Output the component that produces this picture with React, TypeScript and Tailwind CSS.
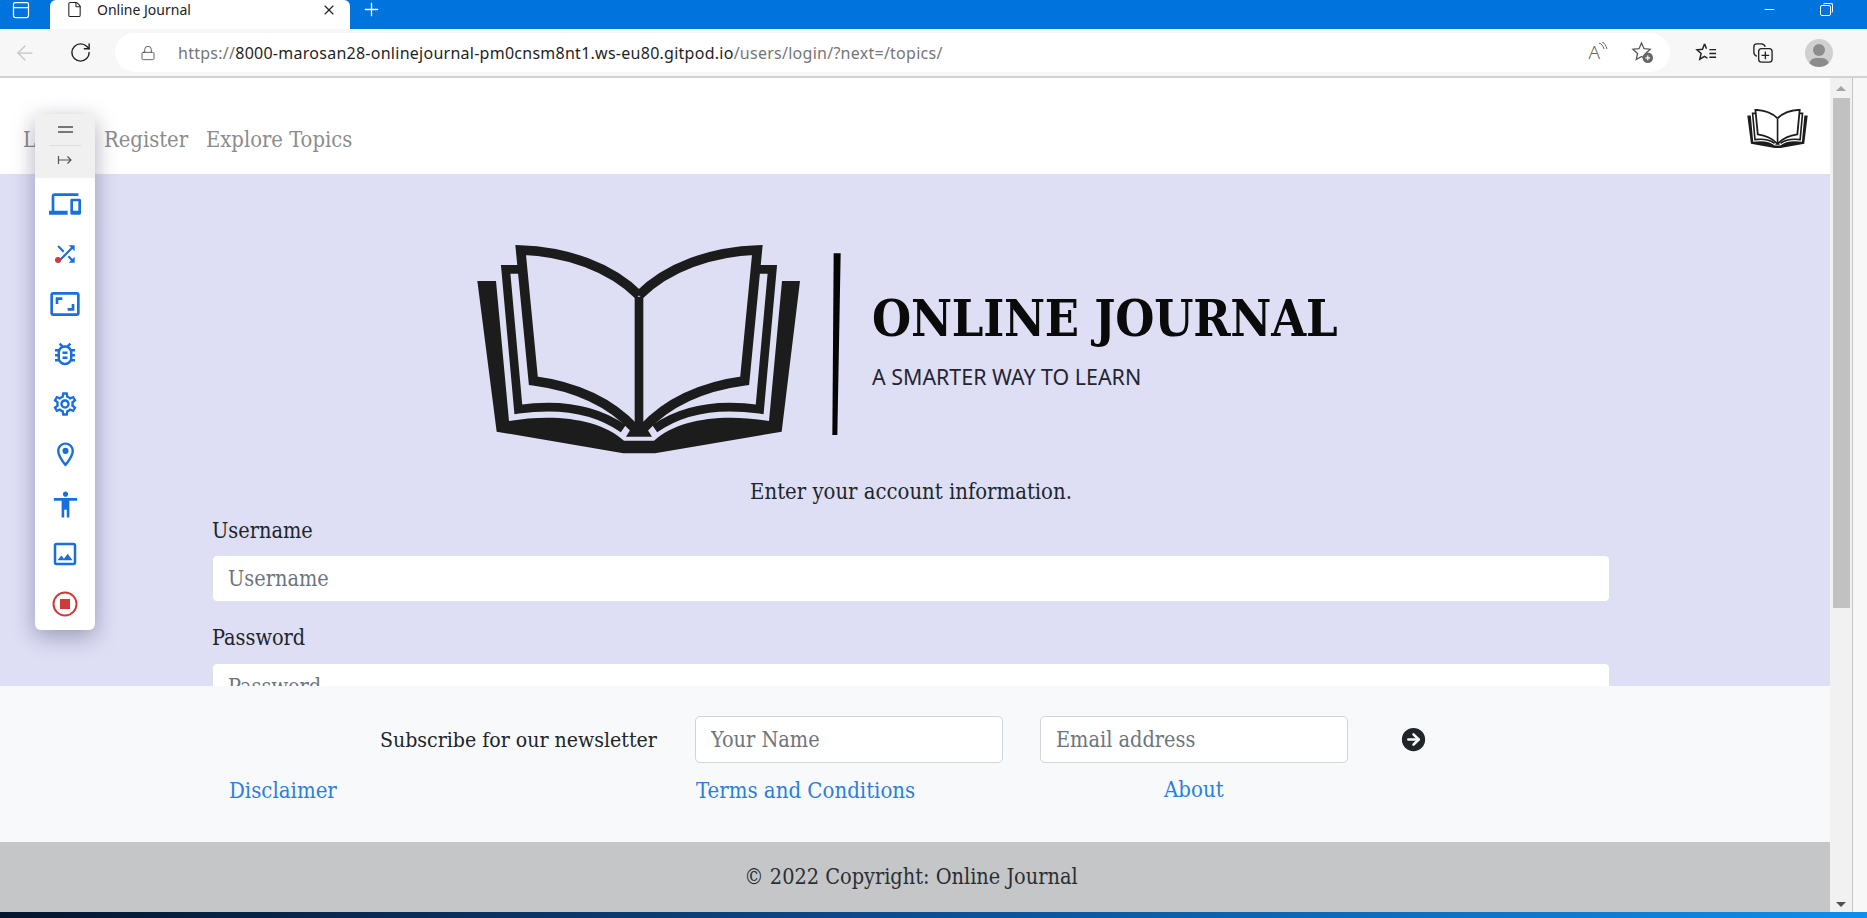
import { ArrowLeft, RotateCw, Plus, X, Minus, Lock, File, PanelTop, CircleArrowRight } from 'lucide-react';
import {
  MdOutlineDevices,
  MdShuffle,
  MdOutlineAspectRatio,
  MdOutlineBugReport,
  MdOutlineSettings,
  MdOutlineLocationOn,
  MdAccessibility,
  MdOutlineImage,
} from 'react-icons/md';

const serif = "font-['DejaVu_Serif_Condensed','DejaVu_Serif',serif]";

// Open book mark, traced from the logo. Coordinates are in a 1200x720 box.
const BookLogo = ({ className, viewBox = '0 0 1200 720', divider = false }: { className: string; viewBox?: string; divider?: boolean }) => (
  <svg viewBox={viewBox} className={className} fill="none">
    <path
      d="M52 153 L108 153 L147 573 C280 550 420 565 492 632 L582 632 C654 565 794 550 927 573 L966 153 L1020 153 L965 605 L585 670 L490 670 L110 605 Z"
      fill="#1c1c1c"
    />
    <g stroke="#1c1c1c" strokeWidth="26" strokeLinejoin="miter">
      <path d="M180 118 L137 118 L175 538 C300 520 410 540 490 596" />
      <path d="M894 118 L937 118 L899 538 C774 520 664 540 584 596" />
      <path d="M537 196 C450 110 320 65 182 60 L220 452 C355 470 455 520 525 596" strokeWidth="29" />
      <path d="M537 196 C624 110 754 65 892 60 L854 452 C719 470 619 520 549 596" strokeWidth="29" />
      <path d="M537 200 L537 612" />
    </g>
    {/* Wedge where the pages meet the spine */}
    <path d="M498 620 L520 585 L554 585 L576 620 Z" fill="#1c1c1c" />
    {divider && <path d="M1121 70 L1142 70 L1132 615 L1117 615 Z" fill="#050505" />}
  </svg>
);

const BrowserChrome = () => (
  <>
    {/* Tab strip */}
    <div className="flex h-[29px] shrink-0 items-center bg-[#0074dc] text-white">
      <div className="flex w-[42px] justify-center pb-[10px]">
        <PanelTop size={20} strokeWidth={1.5} />
      </div>
      <div className="ml-[8px] flex h-full w-[300px] items-center rounded-t-md bg-white pb-[10px] pl-[16px] pr-[12px] text-[#222]">
        <File size={17} strokeWidth={1.5} />
        <span className="ml-[14px] flex-1 font-['Noto_Sans',sans-serif] text-[14px]">Online Journal</span>
        <X size={16} strokeWidth={1.75} className="mr-[1px]" />
      </div>
      <Plus size={21} strokeWidth={1.5} className="mb-[10px] ml-[11px]" />
      <div className="flex-1" />
      <Minus size={15} strokeWidth={1.5} className="mb-[10px] mr-[43px]" />
      <div className="relative mb-[8px] mr-[36px] h-[11px] w-[11px] rounded-[2px] border border-white">
        <div className="absolute left-[2px] top-[-3px] h-[10px] w-[10px] rounded-[2px] border-r border-t border-white" />
      </div>
    </div>
    {/* Address bar */}
    <div className="flex h-[49px] shrink-0 items-center border-b-2 border-[#d2d2d2] bg-[#f7f7f7]">
      <ArrowLeft size={24} strokeWidth={1.25} className="ml-[13px] text-[#c4c4c4]" />
      <RotateCw size={23} strokeWidth={1.5} className="ml-[32px] text-[#222]" />
      <div className="ml-[23px] flex h-[39px] w-[1555px] items-center rounded-full bg-white pl-[25px]">
        <Lock size={16} strokeWidth={1.25} className="text-[#444]" />
        <span className="ml-[22px] font-['Noto_Sans',sans-serif] text-[16px] tracking-[0.26px] text-[#1f1f1f]">
          <span className="text-[#767676]">https://</span>8000-marosan28-onlinejournal-pm0cnsm8nt1.ws-eu80.gitpod.io
          <span className="text-[#767676]">/users/login/?next=/topics/</span>
        </span>
        <div className="flex-1" />
        <span className="relative mr-[31px] font-['Noto_Sans',sans-serif] text-[19px] font-light text-[#666]">
          A
          <svg viewBox="0 0 10 10" className="absolute right-[-8px] top-[4px] h-[10px] w-[10px]" fill="none" stroke="#666">
            <path d="M1 1 C4 2 5 4 6 7 M4 0 C7 1 8 4 9 7" />
          </svg>
        </span>
        <svg viewBox="0 0 24 24" className="mr-[16px] h-[23px] w-[23px]" fill="none" stroke="#555" strokeWidth="1.3">
          <path d="M11 2 L13.6 8 L20 8.6 L15.2 13 L16.5 19.4 L11 16.2 L5.5 19.4 L6.8 13 L2 8.6 L8.4 8 Z" />
          <circle cx="17.5" cy="17.5" r="5.5" fill="#666" stroke="none" />
          <path d="M15 17.5 H20 M17.5 15 V20" stroke="#fff" />
        </svg>
      </div>
      <svg viewBox="0 0 24 24" className="ml-[25px] h-[23px] w-[23px]" fill="none" stroke="#222" strokeWidth="1.5">
        <path d="M10 3 L12 8 M10 3 L7.8 8.6 L2 9.2 L6.4 13 L5 19 L10 16 L13 18 M15 9 H22 M15 13 H22 M15 17 H22" />
      </svg>
      <svg viewBox="0 0 24 24" className="ml-[33px] h-[23px] w-[23px]" fill="none" stroke="#222" strokeWidth="1.4">
        <path d="M6 16 C4 15 3 14 3 12 L3 6 C3 4 4 3 6 3 L11 3 C13 3 14 4 15 6" />
        <rect x="8" y="8" width="14" height="14" rx="3" />
        <path d="M15 11 V19 M11 15 H19" />
      </svg>
      <div className="relative ml-[31px] h-[28px] w-[28px] overflow-hidden rounded-full bg-[#d0d0d0]">
        <div className="absolute left-[8px] top-[5px] h-[12px] w-[12px] rounded-full bg-[#8c8c8c]" />
        <div className="absolute left-[4px] top-[19px] h-[14px] w-[20px] rounded-full bg-[#8c8c8c]" />
      </div>
    </div>
  </>
);

const ToolButton = ({ children }: { children: React.ReactNode }) => (
  <div className="relative flex h-[50px] items-center justify-center text-[#1a6fdc]">{children}</div>
);

// Floating device-toolbar that sits over the page
const FloatingToolbar = () => (
  <div className="absolute left-[35px] top-[114px] z-10 w-[60px] rounded-md bg-white pb-[1px] shadow-[0_6px_22px_rgba(20,20,60,0.35)]">
    <div className="flex h-[64px] flex-col items-center rounded-t-md bg-[#f0f0f0] text-[#666]">
      <div className="flex h-[32px] w-[32px] flex-col items-center justify-center gap-[3px] border-b border-[#dcdcdc]">
        <div className="h-[2px] w-[15px] bg-[#777]" />
        <div className="h-[2px] w-[15px] bg-[#777]" />
      </div>
      <svg viewBox="0 0 16 16" className="mt-[6px] h-[16px] w-[16px]" fill="none" stroke="#555" strokeWidth="1.2">
        <path d="M1.5 4 V12 M1.5 8 H14 M10.5 4.5 L14 8 L10.5 11.5" />
      </svg>
    </div>
    <div className="flex flex-col pt-[1px]">
      <ToolButton>
        <MdOutlineDevices size={32} />
      </ToolButton>
      <ToolButton>
        <MdShuffle size={26} className="ml-[2px]" />
        <div className="absolute left-[20px] top-[28px] h-[6px] w-[6px] rounded-full bg-[#d03a3a]" />
      </ToolButton>
      <ToolButton>
        <MdOutlineAspectRatio size={32} />
      </ToolButton>
      <ToolButton>
        <MdOutlineBugReport size={30} />
      </ToolButton>
      <ToolButton>
        <MdOutlineSettings size={28} />
      </ToolButton>
      <ToolButton>
        <MdOutlineLocationOn size={29} />
      </ToolButton>
      <ToolButton>
        <MdAccessibility size={31} />
      </ToolButton>
      <ToolButton>
        <MdOutlineImage size={30} />
      </ToolButton>
      <ToolButton>
        <svg viewBox="0 0 26 26" className="h-[26px] w-[26px]">
          <circle cx="13" cy="13" r="11.5" fill="none" stroke="#d03a3a" strokeWidth="2" />
          <rect x="8" y="8" width="10" height="10" fill="#d03a3a" />
        </svg>
      </ToolButton>
    </div>
  </div>
);

const Scrollbar = () => (
  <div className="flex w-[37px] shrink-0 bg-[#f7f7f7]">
    <div className="flex w-[23px] flex-col items-center border-r border-[#c4c4c4] bg-[#f1f1f1]">
      <div className="mt-[8px] h-0 w-0 border-x-[5px] border-b-[5px] border-x-transparent border-b-[#a3a3a3]" />
      <div className="mt-[7px] h-[510px] w-[17px] bg-[#c1c1c1]" />
      <div className="flex-1" />
      <div className="mb-[5px] h-0 w-0 border-x-[5px] border-t-[5px] border-x-transparent border-t-[#505050]" />
    </div>
  </div>
);

export default function App() {
  return (
    <div className={`relative flex h-[918px] w-[1867px] flex-col overflow-hidden bg-white ${serif}`}>
      <BrowserChrome />
      <div className="flex min-h-0 flex-1">
        <div className="flex min-w-0 flex-1 flex-col">
          {/* Navbar */}
          <nav className="flex h-[96px] shrink-0 items-center bg-white pl-[23px] pr-[22px] pt-[4px] text-[21.8px] text-[#8c8c8c]">
            <a className="w-[81px] translate-y-[12px]">Login</a>
            <a className="w-[102px] translate-y-[12px]">Register</a>
            <a className="translate-y-[12px]">Explore Topics</a>
            <div className="flex-1" />
            <BookLogo className="h-[39px] w-[61px]" viewBox="52 47 968 625" />
          </nav>

          <main className="h-[512px] shrink-0 overflow-hidden bg-[#dedff5] text-[#212529]">
            <div className="flex pl-[460px] pt-[56px]">
              <BookLogo className="h-[240px] w-[400px] shrink-0" divider />
              <div className="ml-[12px] flex flex-col">
                <h1 className="mt-[54px] text-[50px] font-bold leading-[70px] tracking-[-0.25px] text-[#0a0a0a]">ONLINE JOURNAL</h1>
                <p className="mt-[10px] font-['Noto_Sans',sans-serif] text-[21.4px] leading-[26px] text-[#25252f]">
                  A SMARTER WAY TO LEARN
                </p>
              </div>
            </div>
            <p className="mt-[8px] w-[1398px] translate-x-[212px] text-center text-[21.9px] leading-[28px]">
              Enter your account information.
            </p>
            <form className="ml-[212px] mt-[11px] w-[1398px]">
              <label className="block text-[21.5px] leading-[28px]">Username</label>
              <input
                placeholder="Username"
                className="mt-[10px] block h-[47px] w-full rounded-[5px] border border-[#dee2e6] bg-white px-[15px] text-[21.5px] placeholder:text-[#6c757d]"
              />
              <label className="mt-[22px] block text-[21.5px] leading-[28px]">Password</label>
              <input
                placeholder="Password"
                className="mt-[11px] block h-[47px] w-full rounded-[5px] border border-[#dee2e6] bg-white px-[15px] text-[21.5px] placeholder:text-[#6c757d]"
              />
            </form>
          </main>

          {/* Newsletter and links */}
          <footer className="h-[156px] shrink-0 bg-[#f8f9fa] text-[#212529]">
            <div className="flex items-center pl-[380px] pt-[30px]">
              <span className="w-[315px] text-[21.1px]">Subscribe for our newsletter</span>
              <input
                placeholder="Your Name"
                className="h-[47px] w-[308px] rounded-[5px] border border-[#ced4da] bg-white px-[15px] text-[21.5px] placeholder:text-[#6c757d]"
              />
              <input
                placeholder="Email address"
                className="ml-[37px] h-[47px] w-[308px] rounded-[5px] border border-[#ced4da] bg-white px-[15px] text-[21.5px] placeholder:text-[#6c757d]"
              />
              <CircleArrowRight size={31} className="ml-[50px] fill-[#212529] text-[#f8f9fa]" />
            </div>
            <div className="mt-[14px] flex pl-[229px] text-[22px] leading-[28px] text-[#2b7fdb]">
              <a className="w-[467px]">Disclaimer</a>
              <a className="w-[468px]">Terms and Conditions</a>
              <a className="-mt-[1px]">About</a>
            </div>
          </footer>

          <div className="flex h-[70px] shrink-0 items-center justify-center bg-[#c5c6c8] pr-[8px] text-[21.5px] text-[#2b2f33]">
            © 2022 Copyright: Online Journal
          </div>
        </div>
        <Scrollbar />
      </div>
      <div className="h-[6px] shrink-0 bg-gradient-to-r from-[#04152f] via-[#0a4f96] to-[#0b8ff2]" />
      <FloatingToolbar />
    </div>
  );
}
